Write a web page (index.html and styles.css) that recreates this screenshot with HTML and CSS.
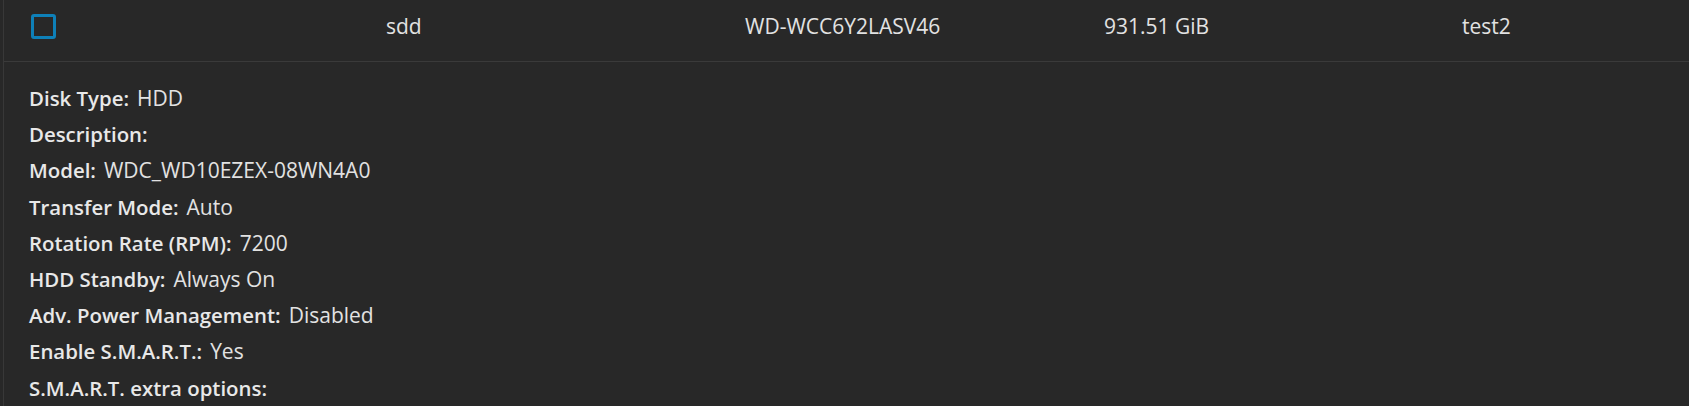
FILE: index.html
```html
<!DOCTYPE html>
<html lang="en">
<head>
<meta charset="utf-8">
<title>Disk</title>
<link rel="stylesheet" href="styles.css">
</head>
<body>
<div class="panel">
  <div class="row">
    <div class="cell cell-check"><span class="checkbox"></span></div>
    <div class="cell">sdd</div>
    <div class="cell">WD-WCC6Y2LASV46</div>
    <div class="cell">931.51 GiB</div>
    <div class="cell">test2</div>
  </div>
  <div class="details">
    <div class="item"><span class="label">Disk Type:</span><span class="value">HDD</span></div>
    <div class="item"><span class="label">Description:</span><span class="value"></span></div>
    <div class="item"><span class="label">Model:</span><span class="value">WDC_WD10EZEX-08WN4A0</span></div>
    <div class="item"><span class="label">Transfer Mode:</span><span class="value">Auto</span></div>
    <div class="item"><span class="label">Rotation Rate (RPM):</span><span class="value">7200</span></div>
    <div class="item"><span class="label">HDD Standby:</span><span class="value">Always On</span></div>
    <div class="item"><span class="label">Adv. Power Management:</span><span class="value">Disabled</span></div>
    <div class="item"><span class="label">Enable S.M.A.R.T.:</span><span class="value">Yes</span></div>
    <div class="item"><span class="label">S.M.A.R.T. extra options:</span><span class="value"></span></div>
  </div>
</div>
</body>
</html>
```
FILE: styles.css
```css
html, body {
  margin: 0;
  padding: 0;
  background: #282828;
  height: 100%;
  overflow: hidden;
}
body {
  font-family: "Open Sans", "Noto Sans", sans-serif;
  color: #e2e2e2;
  font-size: 20.4px;
}
.panel {
  margin-left: 3px;
  border-left: 1px solid #383838;
  min-height: 100%;
}
.row {
  display: grid;
  grid-template-columns: 382px 359px 359px 358px 1fr;
  align-items: center;
  height: 62px;
  box-sizing: border-box;
  padding-bottom: 9px;
  border-bottom: 1px solid #3a3a3a;
  font-size: 21px;
}
.cell {
  line-height: 25px;
}
.cell-check {
  padding-left: 27px;
  display: flex;
  align-items: center;
}
.checkbox {
  display: block;
  width: 19px;
  height: 19px;
  border: 3px solid #0e80b8;
  border-radius: 3px;
}
.details {
  padding: 18px 0 0 25px;
}
.item {
  line-height: 36.2px;
  height: 36.2px;
  white-space: nowrap;
}
.label {
  font-weight: 600;
  color: #e8e8e8;
  margin-right: 8px;
}
.value {
  color: #e2e2e2;
  font-size: 21px;
}
```
